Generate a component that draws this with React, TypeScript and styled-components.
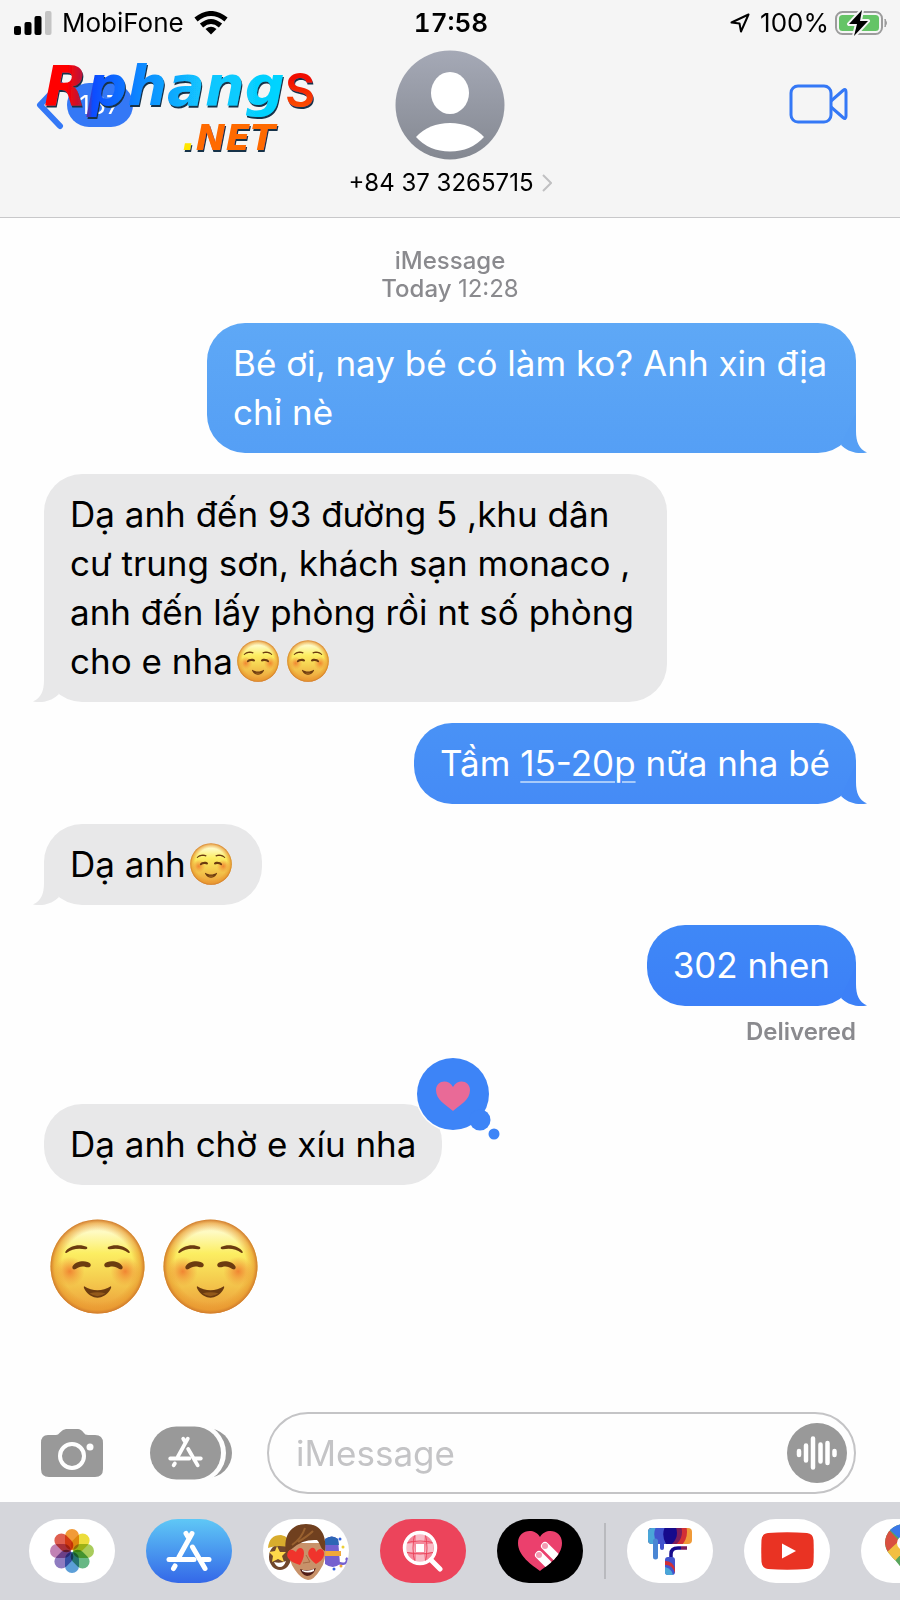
import React from "react";
import styled, { createGlobalStyle } from "styled-components";

const Global = createGlobalStyle`
  *{box-sizing:border-box}
  html,body{margin:0;padding:0;background:#fefefe}
  body{font-family:Inter,"Liberation Sans",sans-serif;color:#000;overflow-x:hidden}
  button{border:0;padding:0;background:none;font:inherit;color:inherit;display:block;flex:none}
  svg{display:block;flex:none}
`;
const Screen = styled.div`min-height:100vh;display:flex;flex-direction:column;background:#fefefe;`;
const Header = styled.header`background:#f5f5f5;border-bottom:1px solid #c8c8ca;display:flex;flex-direction:column;height:218px;`;
const StatusBar = styled.div`display:grid;grid-template-columns:1fr auto 1fr;align-items:center;height:46px;padding:0 12px 0 14px;font-size:26px;line-height:30px;`;
const StatusGroup = styled.div<{ $end?: boolean }>`display:flex;align-items:center;gap:10px;justify-content:${(p) => (p.$end ? "flex-end" : "flex-start")};`;
const Clock = styled.strong`font-weight:600;font-variant-numeric:tabular-nums;`;
const Percent = styled.span`display:flex;align-items:center;gap:6px;`;
const NavBar = styled.div`display:grid;grid-template-columns:1fr auto 1fr;padding:4px 36px 0;`;
const BackArea = styled.div`position:relative;padding-top:25px;`;
const BackButton = styled.button`display:flex;align-items:center;gap:2px;height:60px;`;
const Count = styled.span`width:66px;height:44px;border-radius:22px;background:#3478f6;color:#fff;font-size:26px;line-height:44px;text-align:center;`;
const Watermark = styled.svg`position:absolute;left:0;top:2px;pointer-events:none;`;
const Contact = styled.button`display:flex;flex-direction:column;align-items:center;gap:8px;`;
const ContactName = styled.span`display:flex;align-items:center;gap:8px;font-size:24px;line-height:30px;`;
const VideoButton = styled.button`justify-self:end;padding-top:34px;margin-right:15px;align-self:start;`;
const Thread = styled.main`flex:1;display:flex;flex-direction:column;padding:29px 44px 0;`;
const Stamp = styled.div`text-align:center;color:#8a8a8e;font-size:24px;line-height:28px;font-weight:500;margin-bottom:20px;`;
const StampTime = styled.time`font-weight:400;`;
const Row = styled.div<{ $mine?: boolean; $gap?: number }>`display:flex;justify-content:${(p) => (p.$mine ? "flex-end" : "flex-start")};margin-bottom:${(p) => p.$gap ?? 20}px;`;
const Bubble = styled.div<{ $from?: string; $to?: string; $wide?: number }>`
  position:relative;padding:16px 26px;border-radius:38px;font-size:35px;line-height:49px;
  max-width:${(p) => p.$wide ?? 649}px;
  color:${(p) => (p.$from ? "#fff" : "#000")};
  background:${(p) => (p.$from ? `linear-gradient(${p.$from},${p.$to})` : "#e8e8e9")};
`;
const TailSvg = styled.svg<{ $left?: boolean }>`position:absolute;bottom:0;${(p) => (p.$left ? "left:-11px;transform:scaleX(-1);" : "right:-11px;")}`;
const Detected = styled.a`color:inherit;text-decoration:underline;text-decoration-color:#a8cbfa;text-decoration-thickness:2px;text-underline-offset:5px;`;
const InlineFace = styled.span`display:inline-block;vertical-align:-8px;margin:0 4px;`;
const Delivered = styled.div`text-align:right;color:#8a8a8e;font-size:24px;line-height:28px;font-weight:600;margin:-8px 0 58px;`;
const Reaction = styled.svg`position:absolute;right:-59px;top:-48px;`;
const BigFaces = styled.div`display:flex;gap:18px;padding:0 6px;`;
const Composer = styled.form`display:flex;align-items:center;padding:0 44px 8px 40px;margin-top:40px;`;
const CameraButton = styled.button`margin-right:46px;`;
const AppsButton = styled.button`margin-right:35px;`;
const Field = styled.div`flex:1;min-width:0;height:82px;border:2px solid #c4c4c6;border-radius:41px;display:flex;align-items:center;padding:0 7px 0 27px;`;
const Input = styled.input`flex:1;min-width:0;border:0;outline:0;background:none;font:inherit;font-size:35px;line-height:48px;padding:0;&::placeholder{color:#c4c4c6;opacity:1}`;
const Strip = styled.nav`background:#d5d6db;height:98px;display:flex;align-items:flex-start;gap:31px;padding:17px 0 0 29px;overflow:hidden;`;
const AppPill = styled.button<{ $bg?: string }>`width:86px;height:64px;border-radius:32px;background:${(p) => p.$bg ?? "#fff"};display:flex;align-items:center;justify-content:center;overflow:hidden;`;
const Divider = styled.span`width:2px;height:56px;flex:none;background:#b9babe;margin:4px -10px;`;

function Tail({ color, left }: { color: string; left?: boolean }) {
  return (
    <TailSvg $left={left} width="26" height="40" viewBox="0 0 26 40" aria-hidden="true">
      <path d="M15 0V18C15 29 18 36 26 39.6C15 41.500 6 38 0 32Z" fill={color} />
    </TailSvg>
  );
}

function Face({ size, id }: { size: number; id: string }) {
  return (
    <svg width={size} height={size} viewBox="0 0 96 96" role="img" aria-label="☺️">
      <defs>
        <linearGradient id={`${id}f`} x1="0" y1="0" x2="0" y2="1">
          <stop offset="0" stopColor="#fffbd8" /><stop offset=".14" stopColor="#fefac0" /><stop offset=".36" stopColor="#fcee62" /><stop offset=".62" stopColor="#f5cf50" /><stop offset="1" stopColor="#ec9a38" />
        </linearGradient>
        <radialGradient id={`${id}e`} cx=".5" cy=".5" r=".5">
          <stop offset=".76" stopColor="#e8982c" stopOpacity="0" /><stop offset=".92" stopColor="#e8982e" stopOpacity=".65" /><stop offset="1" stopColor="#cf7a2c" />
        </radialGradient>
        <radialGradient id={`${id}c`}><stop offset="0" stopColor="#f07d2e" stopOpacity=".9" /><stop offset="1" stopColor="#f09038" stopOpacity="0" /></radialGradient>
      </defs>
      <circle cx="48" cy="48" r="47.500" fill={`url(#${id}f)`} />
      <circle cx="48" cy="48" r="47.500" fill={`url(#${id}e)`} />
      <circle cx="20" cy="53" r="15" fill={`url(#${id}c)`} /><circle cx="76" cy="53" r="15" fill={`url(#${id}c)`} />
      <g fill="#6b3b10">
        <path d="M15.500 33C19 27 30 24.500 37 28C38.500 29 37.500 31 35.500 30.600C28 29 22 30.500 17 34Q15 35 15.500 33Z" />
        <path d="M80.500 33C77 27 66 24.500 59 28C57.500 29 58.500 31 60.500 30.600C68 29 74 30.500 79 34Q81 35 80.500 33Z" />
        <path d="M22.500 48.500C26 41.500 38 41.500 41 45.500C42 48.500 39 49.500 36 48.500C32 47.500 29 48.500 26 50.500Q22.500 52 22.500 48.500Z" />
        <path d="M73.500 48.500C70 41.500 58 41.500 55 45.500C54 48.500 57 49.500 60 48.500C64 47.500 67 48.500 70 50.500Q73.500 52 73.500 48.500Z" />
        <path d="M34.500 68C43 73.500 53 73.500 61.500 68Q62.500 69 60.500 72C54 82 42 82 35.500 72Q33.500 69 34.500 68Z" />
      </g>
      <path d="M40 75Q48 73 56 75Q48 81 40 75Z" fill="#93591a" />
    </svg>
  );
}

function StoreGlyph({ width, height, color = "#fff" }: { width: number; height: number; color?: string }) {
  return (
    <svg width={width} height={height} viewBox="0 0 46 42" fill="none" stroke={color} strokeLinecap="round" aria-hidden="true">
      <g strokeWidth="5">
        <path d="M20 3.500L23 8.500M26 3.500L13 27" /><path d="M3 29.500H28" /><path d="M26.500 17L39 38.500" /><path d="M36 29.500H43" /><path d="M9 36L7.500 38.500" />
      </g>
    </svg>
  );
}

const petals = ["#f19b38", "#ecdd3c", "#a9cc5c", "#67b885", "#5c9fd8", "#8f7cc0", "#c182b4", "#df5f50"];

export default function App() {
  return (
    <Screen>
      <Global />
      <Header>
        <StatusBar>
          <StatusGroup>
            <svg width="38" height="24" viewBox="0 0 38 24" aria-label="Signal">
              <rect x="0" y="15" width="7" height="9" rx="2" /><rect x="10.500" y="11" width="7" height="13" rx="2" /><rect x="20.500" y="5" width="7" height="19" rx="2" /><rect x="31" y="0" width="6.500" height="24" rx="2" fill="#c4c4c4" />
            </svg>
            <span>MobiFone</span>
            <svg width="34" height="24" viewBox="0 0 34 24" aria-label="Wi-Fi" fill="none" stroke="#000" strokeWidth="5">
              <path d="M2 8.500Q17 -3.500 32 8.500" /><path d="M7.500 14.500Q17 6.500 26.500 14.500" /><path d="M17 23.500L11.500 18Q17 13.500 22.500 18Z" fill="#000" stroke="none" />
            </svg>
          </StatusGroup>
          <Clock>17:58</Clock>
          <StatusGroup $end>
            <svg width="20" height="20" viewBox="0 0 20 20" aria-label="Location" fill="none" stroke="#000" strokeWidth="2" strokeLinejoin="round"><path d="M18.500 1.500L1.500 9.500L9.500 10.500L11 18.500Z" /></svg>
            <Percent>
              100%
              <svg width="53" height="26" viewBox="0 0 53 26" aria-label="Charging">
                <rect x="1" y="2" width="46" height="22" rx="6.500" fill="none" stroke="#9c9c9c" strokeWidth="2" />
                <rect x="4" y="5" width="40" height="16" rx="3.500" fill="#65c466" />
                <path d="M50 9Q53 13 50 17Z" fill="#9c9c9c" stroke="#9c9c9c" />
                <path d="M27 0L14 14H22L19 26L33 11H25Z" fill="#000" stroke="#f5f5f5" strokeWidth="4" paintOrder="stroke" strokeLinejoin="round" />
              </svg>
            </Percent>
          </StatusGroup>
        </StatusBar>
        <NavBar>
          <BackArea>
            <BackButton aria-label="Back, 167 conversations">
              <svg width="29" height="52" viewBox="0 0 29 52" fill="none" stroke="#3478f6" strokeWidth="6" strokeLinecap="round" strokeLinejoin="round"><path d="M24 5L4 26L24 47" /></svg>
              <Count>167</Count>
            </BackButton>
            <Watermark width="290" height="110" viewBox="0 0 290 110">
              <defs>
                <linearGradient id="wm" gradientUnits="userSpaceOnUse" x1="8" y1="0" x2="250" y2="10">
                  <stop offset=".1" stopColor="#f00" /><stop offset=".17" stopColor="#b01846" /><stop offset=".21" stopColor="#0a4cff" /><stop offset=".42" stopColor="#0f8dff" /><stop offset=".65" stopColor="#12c4ff" /><stop offset="1" stopColor="#00d5ff" />
                </linearGradient>
                <linearGradient id="ws" x1="0" y1="0" x2="0" y2="1"><stop offset=".3" stopColor="#f00c00" /><stop offset="1" stopColor="#ff6a00" /></linearGradient>
                <filter id="sh" x="-5%" y="-5%" width="115%" height="120%"><feDropShadow dx="1" dy="2" stdDeviation="0" floodColor="#16324a" /></filter>
              </defs>
              <g filter="url(#sh)" fontWeight="700" fontFamily="'DejaVu Sans',sans-serif">
                <text x="8" y="53" fontSize="56" fontStyle="italic" fill="url(#wm)">Rphang</text>
                <text x="249" y="55" fontSize="46" fill="url(#ws)" fontWeight="600" fontFamily="Inter,sans-serif">S</text>
                <text x="146" y="98" fontSize="36" fontStyle="italic" fill="#ff6a00"><tspan fill="#ffe600">.</tspan>NET</text>
              </g>
            </Watermark>
          </BackArea>
          <Contact>
            <svg width="110" height="110" viewBox="0 0 110 110" aria-hidden="true">
              <defs><linearGradient id="av" x1="0" y1="0" x2="0" y2="1"><stop stopColor="#a5a9b6" /><stop offset="1" stopColor="#848891" /></linearGradient></defs>
              <circle cx="55" cy="55" r="54.500" fill="url(#av)" />
              <ellipse cx="55" cy="43" rx="19" ry="21" fill="#fff" />
              <path d="M21 87Q34 73 55 73Q76 73 89 87Q76 101.500 55 101.500Q34 101.500 21 87Z" fill="#fff" />
            </svg>
            <ContactName>+84 37 3265715
              <svg width="10" height="18" viewBox="0 0 10 18" fill="none" stroke="#c0c0c2" strokeWidth="2"><path d="M1 1L9 9L1 17" /></svg>
            </ContactName>
          </Contact>
          <VideoButton aria-label="FaceTime">
            <svg width="60" height="40" viewBox="0 0 60 40" fill="none" stroke="#3478f6" strokeWidth="3" strokeLinejoin="round"><rect x="2" y="2" width="40" height="36" rx="7" /><path d="M42 17L54 6.500Q57 4 57 8V32Q57 36 54 33.500L42 23" /></svg>
          </VideoButton>
        </NavBar>
      </Header>

      <Thread>
        <Stamp>iMessage<br />Today <StampTime>12:28</StampTime></Stamp>
        <Row $mine $gap={21}><Bubble $from="#5ea8f6" $to="#559ff5">Bé ơi, nay bé có làm ko? Anh xin địa chỉ nè<Tail color="#559ff5" /></Bubble></Row>
        <Row $gap={21}>
          <Bubble $wide={623}>Dạ anh đến 93 đường 5 ,khu dân cư trung sơn, khách sạn monaco , anh đến lấy phòng rồi nt số phòng cho e nha<InlineFace><Face size={42} id="a" /></InlineFace><InlineFace><Face size={42} id="b" /></InlineFace><Tail left color="#e8e8e9" /></Bubble>
        </Row>
        <Row $mine><Bubble $from="#4992f6" $to="#458bf6">Tầm <Detected href="#time">15-20p</Detected> nữa nha bé<Tail color="#458bf6" /></Bubble></Row>
        <Row><Bubble>Dạ anh<InlineFace><Face size={42} id="c" /></InlineFace><Tail left color="#e8e8e9" /></Bubble></Row>
        <Row $mine><Bubble $from="#3f88f7" $to="#3c80f7">302 nhen<Tail color="#3c80f7" /></Bubble></Row>
        <Delivered>Delivered</Delivered>
        <Row $gap={34}>
          <Bubble>Dạ anh chờ e xíu nha
            <Reaction width="86" height="86" viewBox="0 0 86 86" role="img" aria-label="Loved">
              <circle cx="38" cy="38" r="37.500" fill="#fefefe" />
              <g fill="#3d84f7"><circle cx="38" cy="38" r="36" /><circle cx="65" cy="64" r="10.500" /><circle cx="79" cy="78" r="5.500" /></g>
              <path d="M38 55C31 49 21 44 21 34C21 25 33 22 38 31C43 22 55 25 55 34C55 44 45 49 38 55Z" fill="#e96a97" />
            </Reaction>
          </Bubble>
        </Row>
        <BigFaces><Face size={95} id="d" /><Face size={95} id="e" /></BigFaces>
      </Thread>

      <Composer>
        <CameraButton type="button" aria-label="Camera">
          <svg width="64" height="50" viewBox="0 0 64 50"><path d="M8 7H16Q18 7 20 4.500Q23 1 26 1H38Q41 1 43.500 4.500Q45 7 48 7H55Q63 7 63 15V41Q63 49 55 49H9Q1 49 1 41V15Q1 7 8 7Z" fill="#999" /><circle cx="32" cy="28" r="12" fill="none" stroke="#fff" strokeWidth="4" /><circle cx="50" cy="19" r="3.500" fill="#fff" /></svg>
        </CameraButton>
        <AppsButton type="button" aria-label="Apps">
          <svg width="82" height="54" viewBox="0 0 82 54"><rect x="14" y="2" width="68" height="50" rx="25" fill="#999" /><rect x="-4" y="-3" width="80" height="60" rx="30" fill="#fefefe" /><rect x="0" y="0.500" width="71" height="53" rx="26.500" fill="#999" /><g transform="translate(17 10)"><StoreGlyph width={37} height={32} /></g></svg>
        </AppsButton>
        <Field>
          <Input aria-label="iMessage" placeholder="iMessage" />
          <button type="button" aria-label="Record audio">
            <svg width="60" height="60" viewBox="0 0 60 60"><circle cx="30" cy="30" r="30" fill="#999" /><path d="M12 28V32M19 22.500V37.500M26 15.500V44.500M33.500 21.500V38.500M40.500 20V40M47.500 28V32" stroke="#fff" strokeWidth="4.500" strokeLinecap="round" /></svg>
          </button>
        </Field>
      </Composer>

      <Strip aria-label="iMessage apps">
        <AppPill aria-label="Photos">
          <svg width="46" height="46" viewBox="-23 -23 46 46">{petals.map((c, i) => <rect key={c} x="-7" y="-22" width="14" height="21" rx="7" fill={c} transform={`rotate(${i * 45})`} style={{ mixBlendMode: "multiply" }} />)}</svg>
        </AppPill>
        <AppPill $bg="linear-gradient(#5fc8f6,#3468e8)" aria-label="App Store"><StoreGlyph width={46} height={42} /></AppPill>
        <AppPill aria-label="Memoji">
          <svg width="86" height="64" viewBox="0 0 86 64">
            <ellipse cx="17" cy="38" rx="11" ry="13" fill="#70472c" />
            <path d="M5 29Q6 16 18 16Q27 17 28 29Q16 25 5 29Z" fill="#d8ac2d" />
            <path d="M14 27L17 33L23 33L19 37L21 43L15 40L9 43L10 37L6 33L12 32Z" fill="#ffd84a" />
            <path d="M11 43Q17 45 23 42Q21 48 17 48Q13 48 11 43Z" fill="#fff" />
            <path d="M62 20Q69 15 75 20L77 45Q70 51 62 45Z" fill="#7460cf" /><path d="M62 20Q69 15 75 20L76 26H62Z" fill="#2d66b5" /><path d="M62 32H78V37H62Z" fill="#f0a83a" />
            <path d="M76 44C84 47 85 41 83 39" stroke="#7460cf" strokeWidth="2.500" fill="none" />
            <g><circle cx="77" cy="20" r="1.500" fill="#3565df" /><circle cx="80" cy="28" r="1.500" fill="#edcf35" /><circle cx="71" cy="50" r="1.500" fill="#3565df" /><circle cx="78" cy="47" r="1.500" fill="#f0a83a" /></g>
            <path d="M25 24H62Q64 42 57 51Q51 61 45 61Q38 60 32 51Q25 42 25 24Z" fill="#c8926a" />
            <path d="M23 34C20 15 29 5 43 5C57 5 64 15 62 32C57 30 58 25 54 21Q40 20 30 29Z" fill="#70401f" />
            <path d="M29 26Q39 19 42 9M35 23Q45 17 50 12" stroke="#98602f" strokeWidth="2" fill="none" />
            <path d="M43 36L47 43L40 44" fill="none" stroke="#a66b45" />
            <path d="M37 46C27 43 22 38 25 33C27 29 31 31 33 33C35 27 41 28 41 34C41 39 39 42 37 46Z" fill="#f0342c" /><path d="M53 45C46 40 43 34 47 30C50 27 53 30 53 33C57 27 62 31 61 36C60 41 56 43 53 45Z" fill="#f0342c" />
            <path d="M37 50Q45 53 53 49Q50 57 44 57Q39 56 37 50Z" fill="#511d18" /><path d="M39 51Q45 53 51 50V52Q45 55 39 52Z" fill="#fff" />
          </svg>
        </AppPill>
        <AppPill $bg="#ec445b" aria-label="Images">
          <svg width="42" height="42" viewBox="0 0 42 42"><circle cx="18" cy="18" r="14" fill="#f5899c" /><path d="M14 3H23L22 12H14ZM4 14L12 13L13 22H4ZM24 14H31L31 22L23 23ZM14 24H22L23 32H14Z" fill="#f9bcc7" /><path d="M14 14H22V22H14Z" fill="#fff" /><path d="M3 13Q18 9 33 13M3 22Q18 26 33 22M13 3Q9 18 13 33M23 3Q27 18 23 33" stroke="#ec445b" fill="none" /><circle cx="18" cy="18" r="15.500" stroke="#fff" strokeWidth="3.500" fill="none" /><path d="M29 30L38 39" stroke="#fff" strokeWidth="5" strokeLinecap="round" /></svg>
        </AppPill>
        <AppPill $bg="#000" aria-label="Digital Touch">
          <svg width="46" height="42" viewBox="0 0 46 42"><defs><clipPath id="ht"><path d="M23 41C15 35 1 26 1 13C1 0 17 -3 23 7C29 -3 45 0 45 13C45 26 31 35 23 41Z" /></clipPath></defs><g clipPath="url(#ht)"><rect width="46" height="42" fill="#eb406d" /><g stroke="#fff" strokeWidth="8" strokeLinecap="round"><path d="M28 16L45 33M22 25L38 41" /></g><circle cx="28" cy="16" r="3" fill="#f49ab2" /><circle cx="22" cy="25" r="3" fill="#f49ab2" /></g></svg>
        </AppPill>
        <Divider />
        <AppPill aria-label="Paint">
          <svg width="46" height="48" viewBox="0 0 46 48"><defs><clipPath id="rl"><rect x="1" y="1" width="44" height="16" rx="4" /></clipPath></defs>
            <g clipPath="url(#rl)"><rect width="46" height="17" fill="#f09a38" /><circle cx="21" cy="5" r="19" fill="#d22f35" /><circle cx="19" cy="5" r="16" fill="#7a1d5c" /><circle cx="16" cy="6" r="14" fill="#160a8c" /><path d="M0 0H18Q14 8 19 17H0Z" fill="#4254ce" /><path d="M0 0H9Q5 8 10 17H0Z" fill="#4aa6d8" /></g>
            <path d="M8.500 14V30" stroke="#4a86d4" strokeWidth="5" strokeLinecap="round" /><path d="M15 14V21" stroke="#4254ce" strokeWidth="4" strokeLinecap="round" />
            <path d="M24 32V27Q24 21 31 21H34" fill="none" stroke="#160a8c" strokeWidth="3.500" /><path d="M34 21H40" stroke="#7a1d5c" strokeWidth="3.500" />
            <rect x="18" y="30" width="10" height="18" rx="3" fill="#4254ce" /><path d="M18 34Q26 34 28 42V46Q25 37 18 38Z" fill="#d22f35" /><path d="M18 40Q25 42 26 48H21Q18 48 18 45Z" fill="#4aa6d8" />
          </svg>
        </AppPill>
        <AppPill aria-label="YouTube">
          <svg width="53" height="38" viewBox="0 0 53 38"><path d="M7 1Q26 -0.500 46 1Q52 1.500 52.500 8Q53 19 52.500 30Q52 36.500 46 37Q26 38.500 7 37Q1 36.500 .5 30Q0 19 .5 8Q1 1.500 7 1Z" fill="#e93323" /><path d="M21 11.500L35 19L21 26.500Z" fill="#fff" /></svg>
        </AppPill>
        <AppPill aria-label="Google Maps">
          <svg width="38" height="54" viewBox="0 0 38 54"><defs><clipPath id="mp"><path d="M19 52C16 36 0 32 0 19A19 19 0 0 1 38 19C38 32 22 36 19 52Z" /></clipPath></defs><g clipPath="url(#mp)"><rect width="38" height="54" fill="#58a55c" /><path d="M0 0H38V10L19 19L5 6Z" fill="#3b78e7" /><path d="M2 28L25 3L34 10L8 39Z" fill="#f2bf42" /><path d="M5 7L14 17L2 28L0 20V7Z" fill="#d95040" /></g><circle cx="19" cy="19" r="7" fill="#fff" /></svg>
        </AppPill>
      </Strip>
    </Screen>
  );
}
